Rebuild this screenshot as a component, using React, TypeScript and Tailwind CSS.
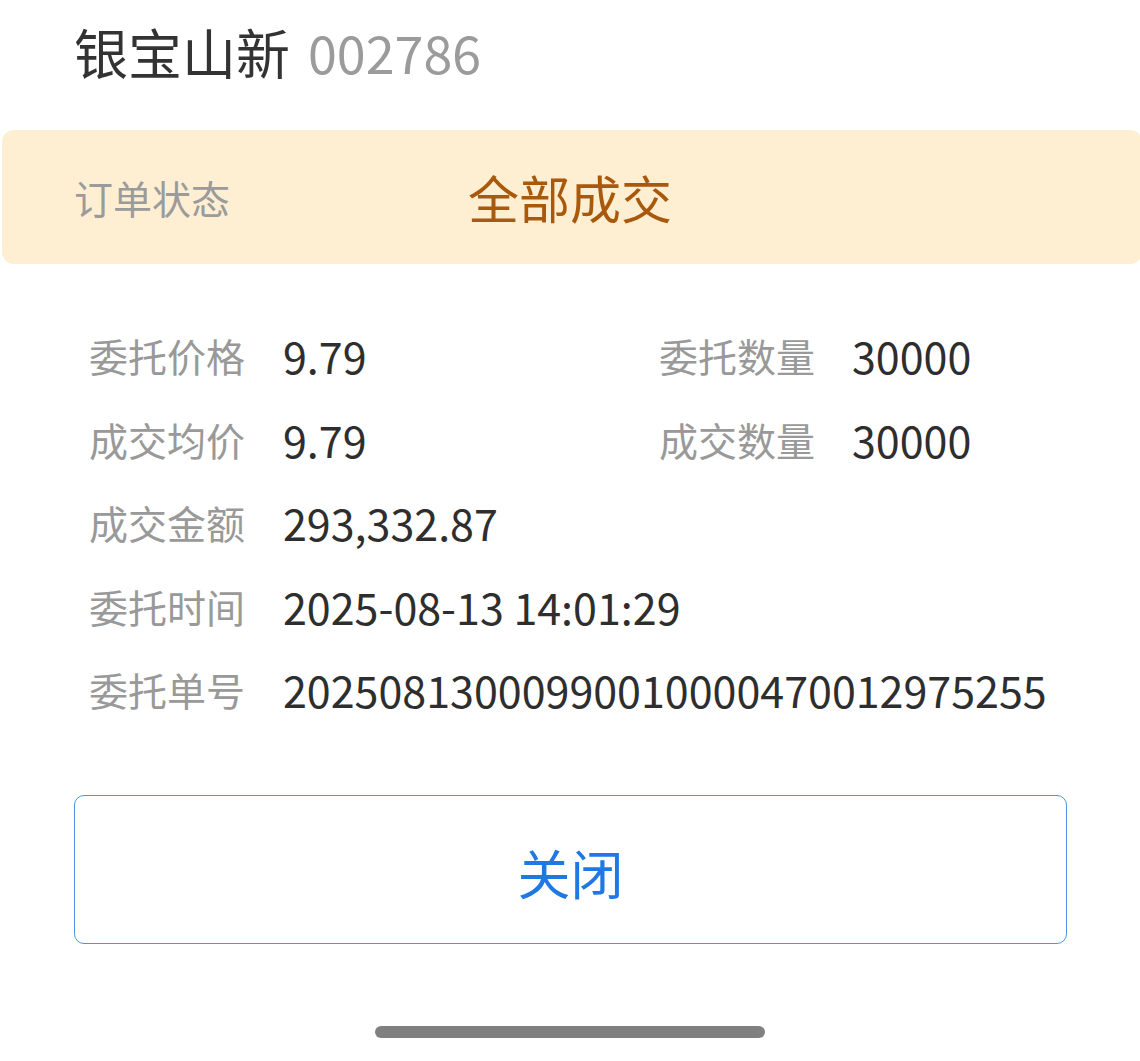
import React from "react";

const font = { fontFamily: '"Noto Sans CJK SC", "Noto Sans", sans-serif' };

function Row({ l1, v1, l2, v2 }: { l1: string; v1: string; l2?: string; v2?: string }) {
  return (
    <div className="flex h-[83.5px] items-center">
      <div className="flex w-[570px] shrink-0 items-center">
        <span className="w-[194px] shrink-0 text-[39px] leading-none text-[#999999]">{l1}</span>
        <span className="whitespace-nowrap text-[43px] leading-none text-[#2e2e2e]">{v1}</span>
      </div>
      {l2 && (
        <div className="flex items-center">
          <span className="w-[193px] shrink-0 text-[39px] leading-none text-[#999999]">{l2}</span>
          <span className="whitespace-nowrap text-[43px] leading-none text-[#2e2e2e]">{v2}</span>
        </div>
      )}
    </div>
  );
}

export default function App() {
  return (
    <div className="relative h-[1061px] w-[1140px] overflow-hidden bg-white" style={font}>
      <div className="flex h-[104px] items-center pl-[74px]">
        <span className="text-[54px] leading-none text-[#333333]">银宝山新</span>
        <span className="ml-[18px] text-[52px] leading-none text-[#9b9b9b]">002786</span>
      </div>
      <div className="ml-[2px] mt-[26px] flex h-[134px] w-[1140px] items-center rounded-[12px] bg-[#feefd3]">
        <span className="w-[466px] shrink-0 pl-[72px] text-[39px] leading-none text-[#9b9b9b]">订单状态</span>
        <span className="text-[51px] leading-none text-[#a9590c]">全部成交</span>
      </div>
      <div className="mt-[50px] flex flex-col pl-[89px]">
        <Row l1="委托价格" v1="9.79" l2="委托数量" v2="30000" />
        <Row l1="成交均价" v1="9.79" l2="成交数量" v2="30000" />
        <Row l1="成交金额" v1="293,332.87" />
        <Row l1="委托时间" v1="2025-08-13 14:01:29" />
        <Row l1="委托单号" v1="20250813000990010000470012975255" />
      </div>
      <button className="ml-[74px] mt-[63px] flex h-[149px] w-[993px] items-center justify-center rounded-[10px] border border-[#4d95df] bg-white">
        <span className="mt-[6px] text-[53px] leading-none text-[#1f78e3]">关闭</span>
      </button>
      <div className="absolute left-[375px] top-[1026px] h-[12px] w-[390px] rounded-full bg-[#808080]" />
    </div>
  );
}
